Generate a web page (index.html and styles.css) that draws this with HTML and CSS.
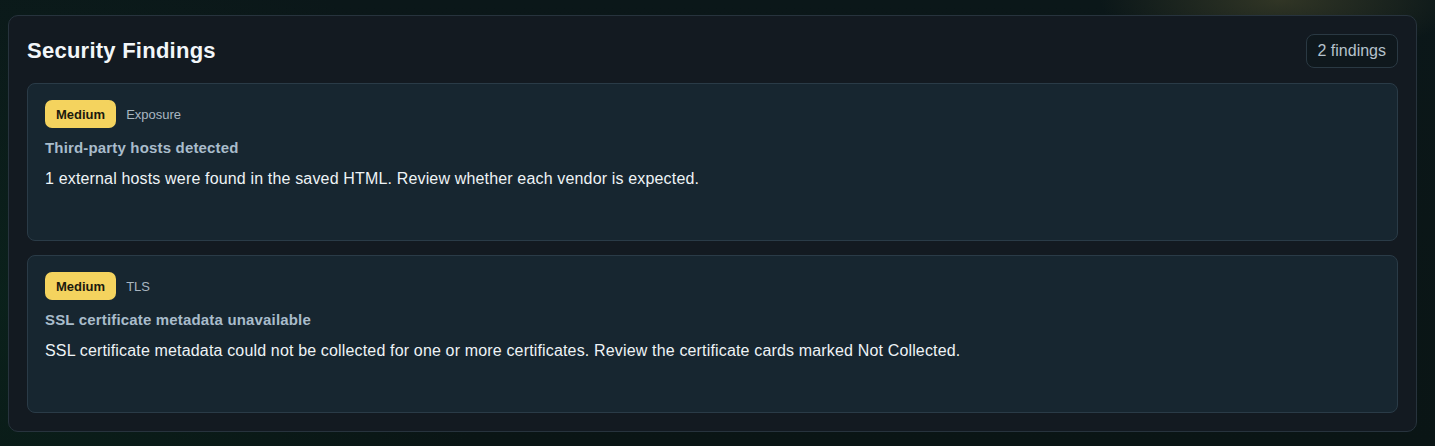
FILE: index.html
```html
<!DOCTYPE html>
<html lang="en">
<head>
<meta charset="utf-8">
<title>Security Findings</title>
<link rel="stylesheet" href="styles.css">
</head>
<body>
<section class="panel">
  <header class="panel-head">
    <h2 class="panel-title">Security Findings</h2>
    <span class="count">2 findings</span>
  </header>
  <div class="list">
    <article class="card">
      <div class="meta">
        <span class="sev">Medium</span>
        <span class="cat">Exposure</span>
      </div>
      <h3 class="card-title">Third-party hosts detected</h3>
      <p class="desc">1 external hosts were found in the saved HTML. Review whether each vendor is expected.</p>
    </article>
    <article class="card">
      <div class="meta">
        <span class="sev">Medium</span>
        <span class="cat">TLS</span>
      </div>
      <h3 class="card-title">SSL certificate metadata unavailable</h3>
      <p class="desc">SSL certificate metadata could not be collected for one or more certificates. Review the certificate cards marked Not Collected.</p>
    </article>
  </div>
</section>
</body>
</html>
```

FILE: styles.css
```css
html, body {
  height: 100%;
}
body {
  margin: 0;
  padding: 15px 18px 15px 8px;
  box-sizing: border-box;
  font-family: "Liberation Sans", Arial, sans-serif;
  background-color: #0b1517;
  background-image:
    radial-gradient(ellipse 180px 60px at 1280px 0px, rgba(120, 110, 60, 0.35), rgba(0,0,0,0) 100%),
    radial-gradient(ellipse 500px 400px at 0px 300px, rgba(10, 40, 30, 0.6), rgba(0,0,0,0) 100%),
    linear-gradient(180deg, #0b1719 0%, #0a1515 100%);
  color: #e8eef2;
}
.panel {
  background: #131a21;
  border: 1px solid #27333d;
  border-radius: 10px;
  padding: 18px;
  display: flex;
  flex-direction: column;
  gap: 15px;
}
.panel-head {
  display: flex;
  align-items: center;
  justify-content: space-between;
}
.panel-title {
  margin: 0;
  font-size: 22px;
  letter-spacing: 0.25px;
  font-weight: 700;
  color: #f2f6f9;
}
.count {
  box-sizing: border-box;
  height: 34px;
  padding: 0 11px;
  display: flex;
  align-items: center;
  font-size: 16px;
  color: #b5c2cc;
  background: #0f181d;
  border: 1px solid #2a3943;
  border-radius: 8px;
}
.list {
  display: flex;
  flex-direction: column;
  gap: 14px;
}
.card {
  box-sizing: border-box;
  min-height: 158px;
  background: #172630;
  border: 1px solid #2a3b47;
  border-radius: 8px;
  padding: 16px 17px;
}
.meta {
  display: flex;
  align-items: center;
  gap: 10px;
}
.sev {
  box-sizing: border-box;
  height: 28px;
  padding: 0 11px;
  display: flex;
  align-items: center;
  font-size: 13px;
  font-weight: 700;
  color: #1b1a0e;
  background: #f4d35e;
  border-radius: 7px;
}
.cat {
  font-size: 13px;
  color: #a9b6c0;
}
.card-title {
  margin: 10px 0 0;
  font-size: 15px;
  line-height: 20px;
  letter-spacing: 0.17px;
  font-weight: 700;
  color: #a9bccb;
}
.desc {
  margin: 10px 0 0;
  font-size: 16px;
  line-height: 22px;
  letter-spacing: 0.16px;
  color: #eef3f6;
}
```
